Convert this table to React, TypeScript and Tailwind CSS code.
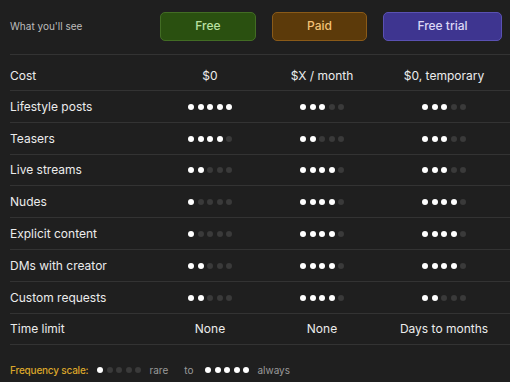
const rows: { label: string; values: (number | string)[] }[] = [
  { label: "Lifestyle posts", values: [5, 3, 3] },
  { label: "Teasers", values: [4, 2, 3] },
  { label: "Live streams", values: [2, 4, 3] },
  { label: "Nudes", values: [1, 4, 4] },
  { label: "Explicit content", values: [1, 4, 4] },
  { label: "DMs with creator", values: [2, 4, 4] },
  { label: "Custom requests", values: [2, 4, 2] },
];

function Dots({ n }: { n: number }) {
  return (
    <div className="flex items-center gap-[3.5px]">
      {[0, 1, 2, 3, 4].map((i) => (
        <span
          key={i}
          className={`w-[6px] h-[6px] rounded-full ${i < n ? "bg-white" : "bg-[#3a3a3a]"}`}
        />
      ))}
    </div>
  );
}

function Row({ label, values, first }: { label: string; values: (number | string)[]; first?: boolean }) {
  return (
    <div
      className={`flex items-center border-b border-[#333333] ${first ? "h-[36px] pt-[6px]" : "h-[31.8px] pt-[1px]"}`}
    >
      <div className="w-[152px] text-[12px] text-[#ececec]">{label}</div>
      {values.map((v, i) => (
        <div
          key={i}
          className={`flex justify-center ${i === 0 ? "w-[96px]" : i === 1 ? "w-[128px]" : "w-[116px]"}`}
        >
          {typeof v === "number" ? <Dots n={v} /> : <span className="text-[12px] text-[#ececec]">{v}</span>}
        </div>
      ))}
    </div>
  );
}

export default function App() {
  return (
    <div
      className="w-[510px] h-[382px] bg-[#1f1f1f] pl-[10px] overflow-hidden"
      style={{ fontFamily: "Inter, 'Liberation Sans', sans-serif" }}
    >
      {/* Header */}
      <div className="flex items-center h-[55px] pb-[2px] border-b border-[#333333]">
        <div className="w-[150px] text-[10px] text-[#bdbdbd]">What you'll see</div>
        <div className="w-[96px] h-[29px] flex items-center justify-center rounded-[5px] bg-[#2a5010] border border-[#426c24] text-[12px] font-medium text-[#b9e0a2]">
          Free
        </div>
        <div className="ml-[16px] w-[95px] h-[29px] flex items-center justify-center rounded-[5px] bg-[#5c3a0a] border border-[#8a5a18] text-[12px] font-medium text-[#f3c276]">
          Paid
        </div>
        <div className="ml-[16px] w-[119px] h-[29px] flex items-center justify-center rounded-[5px] bg-[#3e3590] border border-[#5a51b2] text-[12px] font-medium text-[#dcd8f6]">
          Free trial
        </div>
      </div>

      <Row first label="Cost" values={["$0", "$X / month", "$0, temporary"]} />
      {rows.map((r) => (
        <Row key={r.label} label={r.label} values={r.values} />
      ))}
      <Row label="Time limit" values={["None", "None", "Days to months"]} />

      {/* Footer */}
      <div className="flex items-center h-[48px] pt-[2px] text-[10px]">
        <span className="text-[#dba62a] font-medium tracking-[-0.2px] mr-[9px]">Frequency scale:</span>
        <Dots n={1} />
        <span className="text-[#9a9a9a] ml-[8px]">rare</span>
        <span className="text-[#9a9a9a] ml-[16px] mr-[12px]">to</span>
        <Dots n={5} />
        <span className="text-[#9a9a9a] ml-[8px]">always</span>
      </div>
    </div>
  );
}
